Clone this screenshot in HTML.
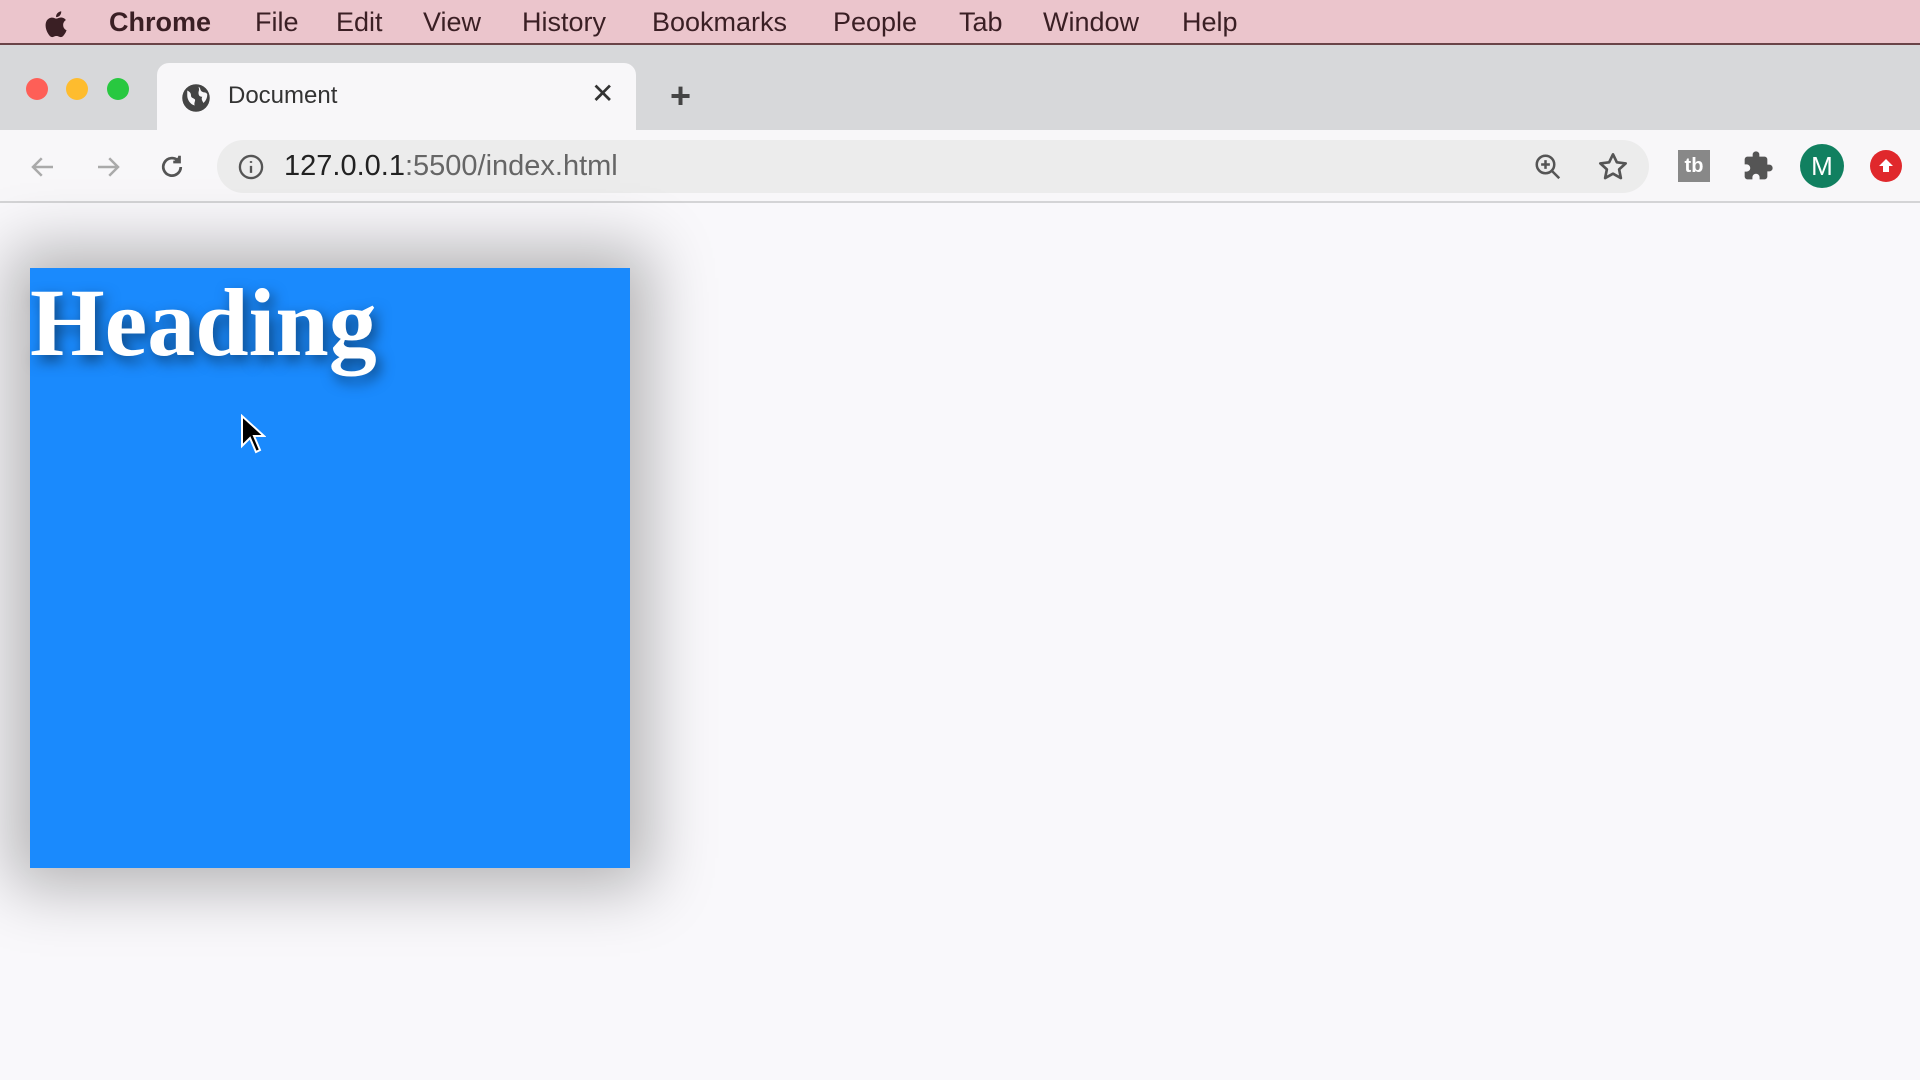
<!DOCTYPE html>
<html><head><style>
*{margin:0;padding:0;box-sizing:border-box}
body{width:1920px;height:1080px;background:#f9f8fb;position:relative;overflow:hidden;font-family:"Liberation Sans",sans-serif}
.a{position:absolute}
#menu{left:0;top:0;width:1920px;height:45px;background:#ebc5cc;border-bottom:2px solid #6a4448}
#menu span{position:absolute;top:7px;font-size:27px;color:#3a1f24}
#strip{left:0;top:45px;width:1920px;height:85px;background:#d7d8da}
#tab{left:157px;top:63px;width:479px;height:70px;background:#f8f7f9;border-radius:12px 12px 0 0}
#tool{left:0;top:130px;width:1920px;height:73px;background:#f8f7f9;border-bottom:2px solid #d4d4d6}
#url{left:217px;top:140px;width:1432px;height:53px;background:#ececec;border-radius:27px}
.dot{width:22px;height:22px;border-radius:50%;top:78px}
#box{left:30px;top:268px;width:600px;height:600px;background:#1a8afd;box-shadow:0 0 60px 20px rgba(0,0,0,.28)}
#h{left:30px;top:268px;font:bold 96px "Liberation Serif",serif;color:#fff;text-shadow:4px 6px 14px rgba(0,0,0,.5);line-height:110px}
</style></head><body>
<div id="menu" class="a">
<svg class="a" style="left:42px;top:9px" width="26" height="30" viewBox="0 0 24 28"><path fill="#3a1f24" d="M19.6 14.9c0-3 2.5-4.5 2.6-4.6-1.4-2.1-3.6-2.4-4.4-2.4-1.9-.2-3.6 1.1-4.6 1.1s-2.4-1.1-4-1c-2 0-3.9 1.200-5 3-2.100 3.700-.5 9.200 1.500 12.200 1 1.500 2.200 3.100 3.800 3 1.500-.1 2.100-1 3.900-1s2.400 1 4 1c1.700 0 2.700-1.500 3.700-3 1.200-1.700 1.600-3.300 1.700-3.400-.1 0-3.200-1.200-3.200-4.900zM16.600 5.900c.8-1 1.400-2.400 1.200-3.800-1.200.1-2.600.8-3.500 1.800-.8.900-1.500 2.300-1.300 3.700 1.400.1 2.700-.7 3.600-1.700z"/></svg>
<span style="left:109px;font-weight:bold">Chrome</span>
<span style="left:255px">File</span><span style="left:336px">Edit</span><span style="left:423px">View</span><span style="left:522px">History</span><span style="left:652px">Bookmarks</span><span style="left:833px">People</span><span style="left:959px">Tab</span><span style="left:1043px">Window</span><span style="left:1182px">Help</span>
</div>
<div id="strip" class="a"></div>
<div class="a dot" style="left:26px;background:#fe5f57"></div>
<div class="a dot" style="left:66px;background:#febc2e"></div>
<div class="a dot" style="left:107px;background:#28c840"></div>
<div id="tab" class="a">
<svg class="a" style="left:24px;top:20px" width="30" height="30" viewBox="0 0 24 24"><circle cx="12" cy="12" r="11" fill="#444"/><path fill="#f8f7f9" d="M5 6c2 1 3 2 3 4s2 2 3 3-1 3 0 5c-4-1-6-5-6-8zM14 3c2 1 1 3 3 4s3 0 4 2c0 3-1 5-3 7-1-2-2-3-1-5-2 0-3-1-3-3s1-2 0-5z"/></svg>
<div class="a" style="left:71px;top:19px;font-size:24px;color:#333">Document</div>
<div class="a" style="left:434px;top:14px;font-size:28px;color:#333">✕</div>
</div>
<div class="a" style="left:670px;top:78px;font-size:36px;color:#444;font-weight:bold;line-height:1">+</div>
<div id="tool" class="a"></div>
<svg class="a" style="left:28px;top:152px" width="30" height="30" viewBox="0 0 24 24" fill="none" stroke="#aaa" stroke-width="2"><path d="M20 12H4M11 5l-7 7 7 7"/></svg>
<svg class="a" style="left:93px;top:152px" width="30" height="30" viewBox="0 0 24 24" fill="none" stroke="#aaa" stroke-width="2"><path d="M4 12h16M13 5l7 7-7 7"/></svg>
<svg class="a" style="left:157px;top:152px" width="30" height="30" viewBox="0 0 24 24" fill="none" stroke="#555" stroke-width="2.2"><path d="M19 12a7 7 0 1 1-2-5"/><path d="M18 3v5h-5" fill="#555"/></svg>
<div id="url" class="a">
<svg class="a" style="left:20px;top:13px" width="28" height="28" viewBox="0 0 24 24" fill="none" stroke="#555" stroke-width="2"><circle cx="12" cy="12" r="9.5"/><path d="M12 11v6M12 7v1.5"/></svg>
<div class="a" style="left:67px;top:10px;font-size:29px;color:#222">127.0.0.1<span style="color:#666">:5500/index.html</span></div>
<svg class="a" style="left:1316px;top:12px" width="30" height="30" viewBox="0 0 24 24" fill="none" stroke="#555" stroke-width="2"><circle cx="10" cy="10" r="7"/><path d="M15 15l6 6M10 6.5v7M6.5 10h7"/></svg>
<svg class="a" style="left:1380px;top:11px" width="32" height="32" viewBox="0 0 24 24" fill="none" stroke="#555" stroke-width="2" stroke-linejoin="round"><path d="M12 2.5l2.9 6 6.6.8-4.9 4.5 1.3 6.5L12 17l-5.900 3.300 1.300-6.500-4.900-4.500 6.600-.8z"/></svg>
</div>
<div class="a" style="left:1678px;top:150px;width:32px;height:32px;background:#888;color:#fff;font:bold 20px 'Liberation Sans';text-align:center;line-height:32px">tb</div>
<svg class="a" style="left:1742px;top:150px" width="32" height="32" viewBox="0 0 24 24"><path fill="#555" d="M20.5 11H19V7a2 2 0 0 0-2-2h-4V3.5a2.5 2.5 0 0 0-5 0V5H4a2 2 0 0 0-2 2v3.8h1.5a2.7 2.7 0 0 1 0 5.4H2V20a2 2 0 0 0 2 2h3.8v-1.5a2.7 2.7 0 0 1 5.4 0V22H17a2 2 0 0 0 2-2v-4h1.5a2.5 2.5 0 0 0 0-5z"/></svg>
<div class="a" style="left:1800px;top:144px;width:44px;height:44px;border-radius:50%;background:#118060;color:#fff;font-size:26px;text-align:center;line-height:44px">M</div>
<div class="a" style="left:1870px;top:150px;width:32px;height:32px;border-radius:50%;background:#e0282c"></div>
<svg class="a" style="left:1876px;top:156px" width="20" height="20" viewBox="0 0 20 20"><path fill="#fff" d="M10 3l7 7h-4v6H7v-6H3z"/></svg>
<div id="box" class="a"></div>
<div id="h" class="a">Heading</div>
<svg class="a" style="left:240px;top:414px" width="26" height="40" viewBox="0 0 13 20"><path d="M1 1v15l4-4 3 7 2-1-3-7h5z" fill="#000" stroke="#fff" stroke-width="1"/></svg>
</body></html>
